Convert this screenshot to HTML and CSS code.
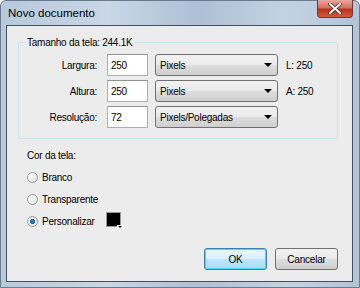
FILE: index.html
```html
<!DOCTYPE html>
<html lang="pt">
<head>
  <meta charset="UTF-8"/>
  <title>Novo documento</title>
  <link rel="stylesheet" href="styles.css">
</head>
<body>

  <div class="window">
    <div class="titlebar">
      <span class="title">Novo documento</span>
      <div class="close-btn">
        <svg width="14" height="11" viewBox="0 0 14 11">
          <path d="M2 1 L12 10 M12 1 L2 10" stroke="#4a2a2a" stroke-width="3.6" stroke-linecap="round"/>
          <path d="M2 1 L12 10 M12 1 L2 10" stroke="#ffffff" stroke-width="2" stroke-linecap="round"/>
        </svg>
      </div>
    </div>

    <div class="client">
      <fieldset class="size-group">
        <legend>Tamanho da tela: 244.1K</legend>

        <div class="size-row">
          <label>Largura:</label>
          <div class="field">250</div>
          <div class="select">Pixels<span class="arrow"></span></div>
          <span class="info">L: 250</span>
        </div>
        <div class="size-row">
          <label>Altura:</label>
          <div class="field">250</div>
          <div class="select">Pixels<span class="arrow"></span></div>
          <span class="info">A: 250</span>
        </div>
        <div class="size-row">
          <label>Resolução:</label>
          <div class="field">72</div>
          <div class="select">Pixels/Polegadas<span class="arrow"></span></div>
        </div>
      </fieldset>

      <div class="color-group">
        <div class="group-title">Cor da tela:</div>
        <div class="radio-row"><span class="radio"></span>Branco</div>
        <div class="radio-row"><span class="radio"></span>Transparente</div>
        <div class="radio-row">
          <span class="radio checked"></span>Personalizar
          <div class="swatch"><span class="swatch-color"></span><span class="swatch-arrow"></span></div>
        </div>
      </div>

      <div class="buttons">
        <button class="btn default">OK</button>
        <button class="btn">Cancelar</button>
      </div>
    </div>
  </div>

</body>
</html>
```

FILE: styles.css
```css
body {
  margin: 0;
  font-family: 'Liberation Sans', Arial, sans-serif;
  font-size: 10px;
  letter-spacing: -0.25px;
  color: #000;
  background: #fff;
}

.window {
  width: 360px;
  height: 288px;
  box-sizing: border-box;
  border: 1px solid #6b7a8c;
  border-radius: 6px 6px 0 0;
  background: linear-gradient(90deg, #b8c9dc 0%, #c9d7e6 30%, #aebfd6 55%, #c4d3e3 80%, #b3c4d8 100%);
  display: flex;
  flex-direction: column;
}

.titlebar {
  height: 24px;
  display: flex;
  align-items: flex-start;
}

.title {
  font-size: 11.5px;
  letter-spacing: 0;
  padding: 6px 0 0 7px;
}

.close-btn {
  margin-left: auto;
  margin-right: 6px;
  margin-top: -1px;
  width: 36px;
  height: 18px;
  box-sizing: border-box;
  border: 1px solid #6a3a3a;
  border-top: none;
  border-radius: 0 0 4px 4px;
  background: linear-gradient(180deg, #e9a79c 0%, #d5705e 45%, #b8321c 55%, #d45a3e 100%);
  display: flex;
  align-items: center;
  justify-content: center;
}

.client {
  flex: 1;
  margin: 0 6px 5px 5px;
  background: #ececec;
  border: 1px solid #45515f;
  display: flex;
  flex-direction: column;
}

.size-group {
  margin: 11px 14px 0 11px;
  padding: 6px 0 10px 0;
  border: 1px solid #c4e4ec;
  border-radius: 2px;
}

.size-group legend {
  margin-left: 6px;
  padding: 0 2px;
}

.size-row {
  display: flex;
  align-items: center;
  height: 22px;
  margin-bottom: 4px;
}

.size-row:last-child {
  margin-bottom: 0;
}

.size-row label {
  width: 78px;
  text-align: right;
}

.field {
  width: 41px;
  height: 22px;
  box-sizing: border-box;
  margin-left: 10px;
  padding: 5px 0 0 3px;
  background: #fff;
  border: 1px solid #abadb3;
  border-top-color: #8f9399;
}

.select {
  width: 123px;
  height: 22px;
  box-sizing: border-box;
  margin-left: 7px;
  padding: 5px 0 0 4px;
  position: relative;
  border: 1px solid #707070;
  border-radius: 3px;
  background: linear-gradient(180deg, #f2f2f2 0%, #ebebeb 50%, #dddddd 51%, #cfcfcf 100%);
}

.arrow {
  position: absolute;
  right: 5px;
  top: 8px;
  border-left: 4px solid transparent;
  border-right: 4px solid transparent;
  border-top: 4px solid #000;
}

.info {
  margin-left: 8px;
}

.color-group {
  padding: 8px 0 0 20px;
}

.group-title {
  height: 19px;
  line-height: 18px;
}

.radio-row {
  display: flex;
  align-items: center;
  height: 22px;
}

.radio {
  width: 11px;
  height: 11px;
  box-sizing: border-box;
  margin-right: 4px;
  border: 1px solid #9a9a9a;
  border-radius: 50%;
  background: radial-gradient(circle at 35% 35%, #ffffff 0%, #d8d8d8 100%);
}

.radio.checked {
  background: radial-gradient(circle, #2b8fd6 0%, #1b5ea8 35%, #f4f4f4 45%, #dcdcdc 100%);
}

.swatch {
  margin-left: 11px;
  width: 17px;
  height: 17px;
  position: relative;
  margin-top: -2px;
}

.swatch-color {
  display: block;
  width: 15px;
  height: 15px;
  background: #000;
  border: 1px solid #999;
  box-sizing: border-box;
}

.swatch-arrow {
  position: absolute;
  right: 0;
  bottom: 0;
  width: 6px;
  height: 4px;
  background: #fff;
}

.swatch-arrow::after {
  content: "";
  position: absolute;
  left: 1px;
  top: 1px;
  border-left: 2px solid transparent;
  border-right: 2px solid transparent;
  border-top: 2px solid #000;
}

.buttons {
  margin-top: auto;
  margin-bottom: 11px;
  display: flex;
  justify-content: flex-end;
  gap: 8px;
  padding-right: 14px;
}

.btn {
  width: 63px;
  height: 22px;
  font-family: inherit;
  font-size: 10px;
  letter-spacing: -0.2px;
  color: #000;
  border: 1px solid #707070;
  border-radius: 3px;
  background: linear-gradient(180deg, #f2f2f2 0%, #ebebeb 50%, #dddddd 51%, #cfcfcf 100%);
  padding: 0;
}

.btn.default {
  border-color: #3c7fb1;
  box-shadow: inset 0 0 0 1px #48d8fb;
  background: linear-gradient(180deg, #eaf6fd 0%, #d9f0fc 50%, #bee6fd 51%, #a7d9f5 100%);
}
```
